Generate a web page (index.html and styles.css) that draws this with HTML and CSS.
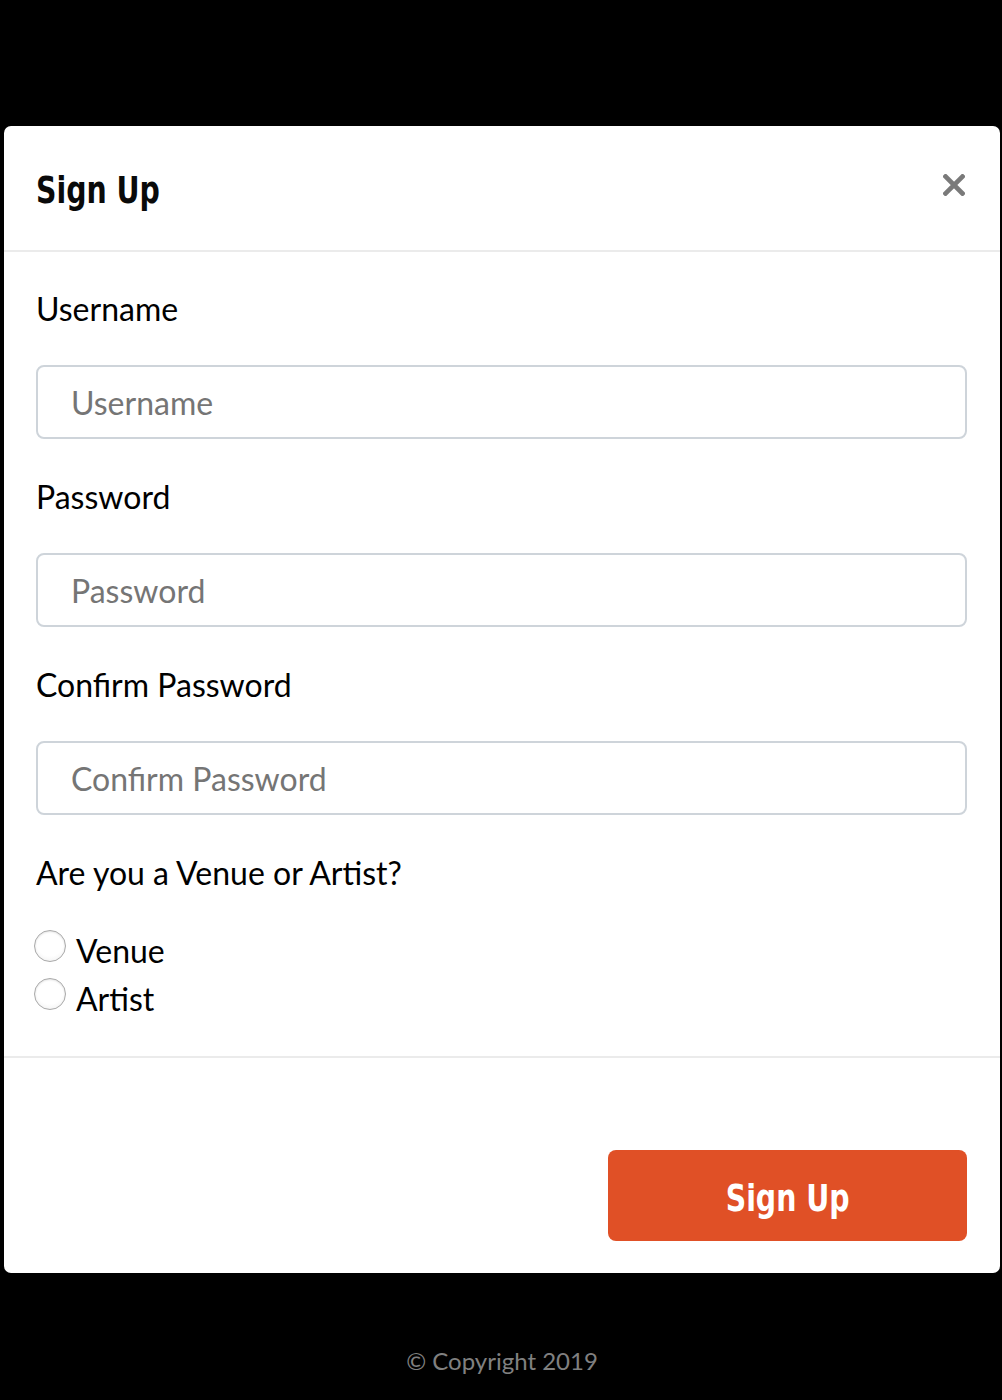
FILE: index.html
```html
<!DOCTYPE html>
<html lang="en">
<head>
<meta charset="utf-8">
<title>Sign Up</title>
<link rel="stylesheet" href="styles.css">
</head>
<body>
<div class="page">
  <div class="modal">
    <div class="modal-header">
      <h2 class="modal-title"><span class="narrow narrow-left">Sign Up</span></h2>
      <button class="close" type="button" aria-label="Close">
        <svg width="22" height="22" viewBox="0 0 22 22"><path d="M2.5 2.5 L19.5 19.5 M19.5 2.5 L2.5 19.5" stroke="#7a7a7a" stroke-width="4.6" stroke-linecap="square"/></svg>
      </button>
    </div>
    <div class="modal-body">
      <div class="group">
        <label class="label">Username</label>
        <input class="input" type="text" placeholder="Username">
      </div>
      <div class="group">
        <label class="label">Password</label>
        <input class="input" type="password" placeholder="Password">
      </div>
      <div class="group">
        <label class="label">Confirm Password</label>
        <input class="input" type="password" placeholder="Confirm Password">
      </div>
      <div class="question">Are you a Venue or Artist?</div>
      <div class="radios">
        <label class="radio-row"><input class="radio" type="radio" name="role"><span class="radio-text">Venue</span></label>
        <label class="radio-row"><input class="radio" type="radio" name="role"><span class="radio-text">Artist</span></label>
      </div>
    </div>
    <div class="modal-footer">
      <button class="btn" type="button"><span class="narrow">Sign Up</span></button>
    </div>
  </div>
  <footer class="copyright">© Copyright 2019</footer>
</div>
</body>
</html>
```

FILE: styles.css
```css
* { box-sizing: border-box; }
html, body { margin: 0; padding: 0; background: #000; }
body { font-family: Lato, "Open Sans", sans-serif; color: #000; }
.page { padding: 126px 2px 0 4px; min-height: 1400px; }
.modal { background: #fff; border-radius: 7px; overflow: hidden; }
.modal-header {
  height: 126px;
  display: flex;
  align-items: center;
  justify-content: space-between;
  padding: 0 35px 2px 32px;
  border-bottom: 2px solid #ebebeb;
}
.modal-title {
  margin: 0;
  font-family: "DejaVu Sans Condensed", "DejaVu Sans", sans-serif;
  font-weight: 700;
  font-size: 38px;
  line-height: 48px;
  color: #0a0a0a;
}
.narrow { display: inline-block; transform: scaleX(0.83); white-space: nowrap; }
.narrow-left { transform-origin: 0 50%; margin-top: 6px; }
.close { background: none; border: 0; padding: 0; width: 22px; height: 22px; display: flex; margin-top: -4px; }
.modal-body { padding: 36px 33px 38px 32px; }
.group { margin-bottom: 37px; }
.label, .question {
  display: block;
  font-size: 32px;
  line-height: 42px;
  margin-bottom: 35px;
}
.question { margin-bottom: 28px; }
.input {
  display: block;
  width: 100%;
  height: 74px;
  border: 2px solid #ced4da;
  border-radius: 8px;
  padding: 0 33px;
  font-family: Lato, sans-serif;
  font-size: 32px;
  color: #495057;
  outline: none;
}
.input::placeholder { color: #757575; opacity: 1; }
.radios { display: flex; flex-direction: column; }
.radio-row { display: flex; align-items: center; height: 48px; font-size: 32px; }
.radio-text { padding-top: 10px; line-height: 38px; }
.radio {
  appearance: none;
  -webkit-appearance: none;
  width: 32px;
  height: 32px;
  margin: 0 10px 0 -2px;
  border-radius: 50%;
  border: 1.5px solid #a9a9a9;
  background: radial-gradient(circle at 50% 40%, #ffffff 55%, #ececec 100%);
  box-shadow: inset 0 1px 2px rgba(0,0,0,0.12);
  flex: none;
}
.modal-footer {
  border-top: 2px solid #ebebeb;
  display: flex;
  justify-content: flex-end;
  padding: 92px 33px 32px;
}
.btn {
  width: 359px;
  height: 91px;
  background: #e05026;
  color: #fff;
  border: 0;
  border-radius: 8px;
  font-family: "DejaVu Sans Condensed", "DejaVu Sans", sans-serif;
  font-weight: 700;
  font-size: 38px;
  padding: 4px 0 0;
}
.copyright {
  margin-top: 70px;
  text-align: center;
  color: #808080;
  font-size: 24px;
  line-height: 36px;
}
```
